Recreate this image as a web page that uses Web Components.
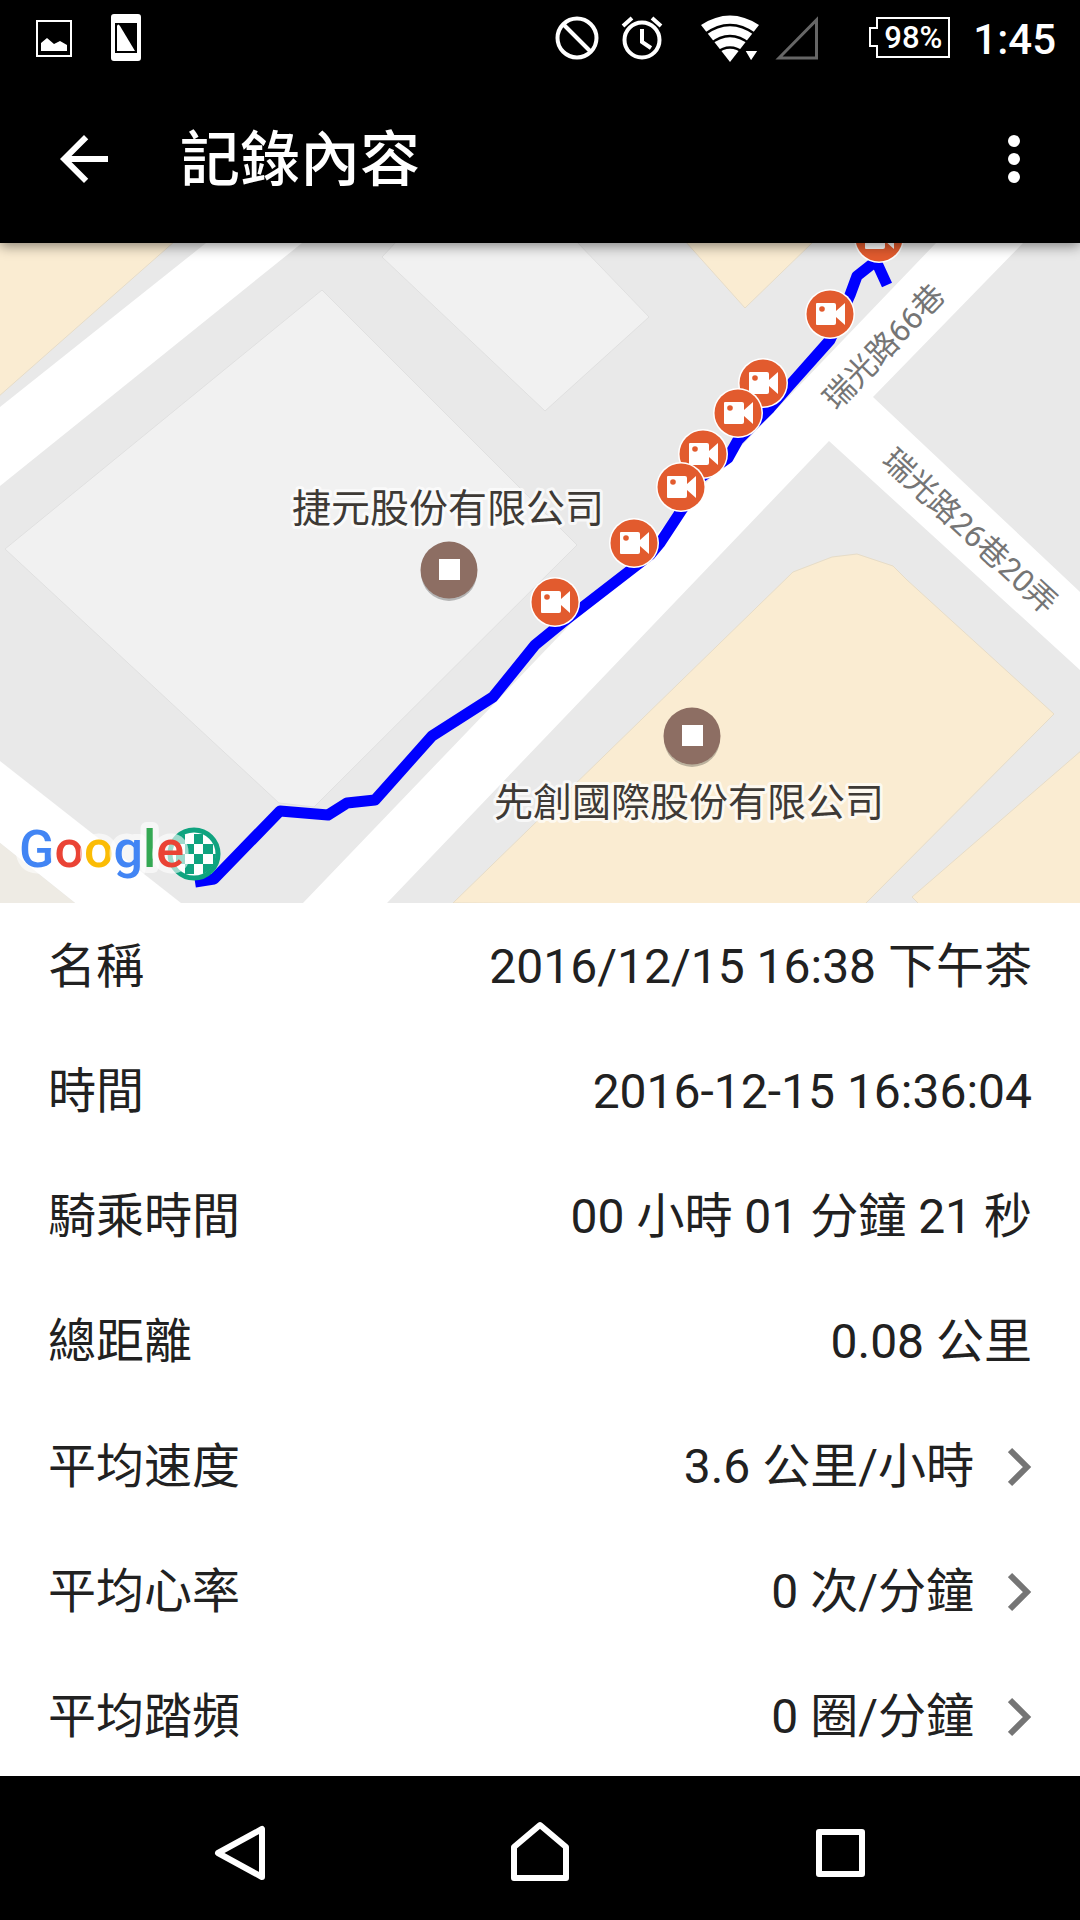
<!DOCTYPE html>
<html lang="zh-Hans">
<head>
<meta charset="utf-8">
<meta name="viewport" content="width=device-width, initial-scale=1">
<title>記錄內容</title>
<style>
  body {
    margin: 0;
    background: #fff;
    color: #212121;
    font-family: Roboto, "Noto Sans CJK SC", sans-serif;
  }
</style>
</head>
<body>
<ride-screen>
  <status-bar slot="status" battery="98%" time="1:45"></status-bar>
  <app-bar slot="bar">記錄內容</app-bar>
  <route-map slot="map"></route-map>
  <record-row label="名稱">2016/12/15 16:38 下午茶</record-row>
  <record-row label="時間">2016-12-15 16:36:04</record-row>
  <record-row label="騎乘時間">00 小時 01 分鐘 21 秒</record-row>
  <record-row label="總距離">0.08 公里</record-row>
  <record-row label="平均速度" more>3.6 公里/小時</record-row>
  <record-row label="平均心率" more>0 次/分鐘</record-row>
  <record-row label="平均踏頻" more>0 圈/分鐘</record-row>
  <nav-bar slot="nav"></nav-bar>
</ride-screen>

<script>
// Page frame: fixed bars, map, scrolling list
class RideScreen extends HTMLElement {
  constructor() {
    super();
    this.attachShadow({ mode: 'open' }).innerHTML = `
      <style>
        :host {
          display: flex;
          flex-direction: column;
          height: 100vh;
        }
        main {
          flex: 1;
          min-height: 0;
          overflow-y: auto;
          scrollbar-width: none;
        }
      </style>
      <slot name="status"></slot>
      <slot name="bar"></slot>
      <slot name="map"></slot>
      <main><slot></slot></main>
      <slot name="nav"></slot>
    `;
  }
}

// System status bar
class StatusBar extends HTMLElement {
  constructor() {
    super();
    this.attachShadow({ mode: 'open' });
  }

  connectedCallback() {
    this.shadowRoot.innerHTML = `
      <style>
        :host {
          display: flex;
          justify-content: space-between;
          height: 75px;
          padding: 0 24px 0 36px;
          background: #000;
          color: #fff;
          font-weight: 500;
        }
        .group { display: flex; align-items: center; }
        .left { gap: 39px; }
        .alerts { display: flex; gap: 22px; margin-right: 38px; }
        .radio { display: flex; gap: 14px; margin-right: 50px; }
        svg { display: block; }
        .battery {
          display: grid;
          place-items: center;
          margin-right: 22px;
        }
        .battery > * { grid-area: 1 / 1; }
        .battery span { font-size: 31px; line-height: 42px; padding-left: 6px; }
        time { font-size: 42px; line-height: 75px; padding-top: 3px; }
      </style>
      <div class="group left">
        <svg width="36" height="48" viewBox="0 0 36 48" fill="#fff">
          <path d="M1 7h34v35H1z" fill="none" stroke="#fff" stroke-width="2"/>
          <path d="M5 29l6-5 7 6 6-3 7 4v6H5z"/>
        </svg>
        <svg width="30" height="48" viewBox="0 0 30 48" fill="#fff">
          <path fill-rule="evenodd" d="M3 0h24q3 0 3 3v41q0 3-3 3H3q-3 0-3-3V3q0-3 3-3zM4 9v30h22V9z"/>
          <path d="M6 12q1-3 3 0l15 25H6z"/>
        </svg>
      </div>
      <div class="group">
        <div class="alerts">
          <svg width="44" height="48" viewBox="0 0 44 48" fill="none" stroke="#fff" stroke-width="4">
            <circle cx="22" cy="24" r="19.500"/>
            <path d="M8 10l28 28"/>
          </svg>
          <svg width="42" height="48" viewBox="0 0 42 48" fill="none" stroke="#fff" stroke-width="4">
            <circle cx="21" cy="26" r="17.500"/>
            <path d="M21 15v13l9 6M2 12l9-8M31 4l9 8"/>
          </svg>
        </div>
        <div class="radio">
          <svg width="59" height="48" viewBox="0 0 59 48">
            <path d="M0 11Q29-8 58 11L29 48z" fill="#fff"/>
            <path d="M4 20Q29 2 54 20M9 30Q29 14 49 30M15 39Q29 28 43 39" fill="none" stroke="#000" stroke-width="2.500"/>
            <path d="M43 36h15l-8 12z" fill="#fff" stroke="#000" stroke-width="2"/>
          </svg>
          <svg width="45" height="48" viewBox="0 0 45 48">
            <path d="M5 44L42.500 6v38z" fill="none" stroke="#666" stroke-width="3"/>
          </svg>
        </div>
        <div class="battery">
          <svg width="82" height="42" viewBox="0 0 82 42" fill="none" stroke="#fff" stroke-width="2">
            <path d="M8 1h72v39H8V29H1V11h7z"/>
          </svg>
          <span>${this.getAttribute('battery')}</span>
        </div>
        <time>${this.getAttribute('time')}</time>
      </div>
    `;
  }
}

// Title bar with back and overflow buttons
class AppBar extends HTMLElement {
  constructor() {
    super();
    this.attachShadow({ mode: 'open' }).innerHTML = `
      <style>
        :host {
          position: relative;
          z-index: 1;
          display: flex;
          align-items: center;
          height: 168px;
          padding: 0 30px 0 48px;
          background: #000;
          color: #fff;
          box-shadow: 0 3px 12px rgba(0, 0, 0, .45);
        }
        button {
          padding: 0;
          border: 0;
          background: none;
          color: inherit;
        }
        svg { display: block; }
        h1 {
          flex: 1;
          margin: 0;
          padding: 4px 0 0 60px;
          font-size: 60px;
          line-height: 72px;
          font-weight: 500;
        }
      </style>
      <button aria-label="返回">
        <svg width="72" height="72" viewBox="0 0 24 24" fill="currentColor">
          <path d="M20 11H7.830l5.590-5.590L12 4l-8 8 8 8 1.410-1.410L7.830 13H20z"/>
        </svg>
      </button>
      <h1><slot></slot></h1>
      <button aria-label="更多">
        <svg width="72" height="72" viewBox="0 0 24 24" fill="currentColor">
          <circle cx="12" cy="6" r="2"/><circle cx="12" cy="12" r="2"/><circle cx="12" cy="18" r="2"/>
        </svg>
      </button>
    `;
  }
}

// Recorded route drawn over the street map
class RouteMap extends HTMLElement {
  constructor() {
    super();
    this.attachShadow({ mode: 'open' });
    this.videos = [
      [879, 238], [830, 314], [763, 383], [738, 413],
      [703, 454], [681, 487], [634, 543], [555, 602]
    ];
    this.places = [[449, 570], [692, 736]];
  }

  connectedCallback() {
    const use = (id, list) => list.map(([x, y]) => `<use href="#${id}" x="${x}" y="${y}"/>`).join('');

    this.shadowRoot.innerHTML = `
      <style>
        :host {
          display: block;
          flex: none;
          aspect-ratio: 18 / 11;
          overflow: hidden;
        }
        svg { display: block; width: 100%; height: 100%; }
        .building { fill: #f1f1f1; stroke: #e0e0e0; }
        .shop { fill: #faecd2; stroke: #e6dcc8; }
        .road { fill: #fff; }
        .route { fill: none; stroke: #00f; stroke-width: 11; stroke-linejoin: round; }
        text { font-family: Roboto, "Noto Sans CJK SC", sans-serif; text-anchor: middle; }
        .place {
          font-size: 39px;
          fill: #3e3a36;
          stroke: #fff;
          stroke-opacity: .7;
          stroke-width: 6;
          stroke-linejoin: round;
          paint-order: stroke;
        }
        .street { font-size: 31px; fill: #757575; }
        .brand {
          font-size: 52px;
          font-weight: 500;
          text-anchor: start;
          stroke: #fff;
          stroke-opacity: .6;
          stroke-width: 12;
          stroke-linejoin: round;
          paint-order: stroke;
        }
      </style>
      <svg viewBox="0 243 1080 660" preserveAspectRatio="xMidYMid slice">
        <defs>
          <g id="video">
            <circle r="25" fill="#fff"/>
            <circle r="23.500" fill="#e25b2e"/>
            <path d="M-14-10q0-1 1-1H4q2 0 2 2v6l9-8v22L6 3v6q0 2-2 2h-17q-1 0-1-1z" fill="#fff"/>
            <circle cx="-8" cy="-5" r="2.800" fill="#e25b2e"/>
          </g>
          <g id="place">
            <circle cy="3" r="28" fill="#000" opacity=".25"/>
            <circle r="28.500" fill="#8d6e63"/>
            <path d="M-10-11h21v21h-21z" fill="#fff"/>
          </g>
          <clipPath id="disc"><circle cx="194" cy="854" r="22"/></clipPath>
        </defs>
        <path d="M0 243h1080v660H0z" fill="#e9e9e9"/>
        <path class="shop" d="M-2 241h177L-2 397zM685 241l60 67 69-67z"/>
        <path class="shop" d="M453 903L793 572l39-15 25-3 36 12 14 14 147 134-190 191zM1082 750L912 897l8 8h162z"/>
        <path class="building" d="M322 290L5 549l274 254 35 4 263-262-59-59z"/>
        <path class="building" d="M397 241l-15 16 163 154 104-94-73-76z"/>
        <path class="road" d="M206 243h96L0 486v-79z"/>
        <path class="road" d="M936 243h87L873 397l207 195v78L829 441 387 903h-84z"/>
        <path class="road" d="M0 761l181 142H75L0 843z"/>
        <path d="M0 843l75 60H0z" fill="#eeebe4"/>
        <text class="street" transform="translate(883 346) rotate(-46)" y="12">瑞光路66巷</text>
        <text class="street" transform="translate(970 531) rotate(43)" y="11">瑞光路26巷20弄</text>
        ${use('place', this.places)}
        <text class="place" x="448" y="522">捷元股份有限公司</text>
        <text class="place" x="689" y="816">先創國際股份有限公司</text>
        <path class="route" d="M195 882l19-3 66-68 48 4 19-12 28-3 57-64 61-39 42-52 27-22 88-68 10-12 23-35 17-30 28-20 10-18 32-32 20-23 40-45 20-45 7-19 19-15 11 24"/>
        ${use('video', this.videos)}
        <circle cx="194" cy="854" r="24" fill="#fff" stroke="#0fa37f" stroke-width="5"/>
        <path clip-path="url(#disc)" fill="#0fa37f" d="M194 834h9v10h-9zM176 834h9v10h-9zM185 844h9v10h-9zM203 844h10v10h-10zM176 854h9v10h-9zM194 854h9v10h-9zM213 854h9v10h-9zM185 864h9v10h-9zM203 864h10v10h-10zM213 834h9v10h-9z"/>
        <text class="brand" x="19" y="867"><tspan fill="#4285f4">G</tspan><tspan fill="#ea4335">o</tspan><tspan fill="#fbbc05">o</tspan><tspan fill="#4285f4">g</tspan><tspan fill="#34a853">l</tspan><tspan fill="#ea4335">e</tspan></text>
      </svg>
    `;
  }
}

// One line of the record; "more" turns it into a button with a chevron
class RecordRow extends HTMLElement {
  constructor() {
    super();
    this.attachShadow({ mode: 'open' });
  }

  connectedCallback() {
    const more = this.hasAttribute('more');
    const tag = more ? 'button' : 'div';

    this.shadowRoot.innerHTML = `
      <style>
        :host { display: block; }
        .row {
          display: flex;
          align-items: center;
          box-sizing: border-box;
          width: 100%;
          height: 125px;
          padding: 3px 48px 0;
          border: 0;
          background: #fff;
          color: inherit;
          font: inherit;
          font-size: 48px;
          line-height: 72px;
          text-align: left;
        }
        .value { flex: 1; text-align: right; }
        svg { display: block; margin-left: 34px; }
      </style>
      <${tag} class="row">
        <span>${this.getAttribute('label')}</span>
        <span class="value"><slot></slot></span>
        ${more ? `<svg width="24" height="40" viewBox="0 0 24 40" fill="none" stroke="#757575" stroke-width="6">
          <path d="M2 3l17 17L2 37"/>
        </svg>` : ''}
      </${tag}>
    `;
  }
}

// System navigation buttons
class NavBar extends HTMLElement {
  constructor() {
    super();
    this.attachShadow({ mode: 'open' }).innerHTML = `
      <style>
        :host { display: block; background: #000; }
        nav {
          display: flex;
          height: 144px;
          padding: 0 90px;
        }
        button {
          flex: 1;
          display: grid;
          place-items: center;
          padding: 0;
          border: 0;
          background: none;
        }
        svg {
          fill: none;
          stroke: #fff;
          stroke-width: 6;
          stroke-linejoin: round;
        }
      </style>
      <nav>
        <button aria-label="返回"><svg width="72" height="72" viewBox="0 0 72 72"><path d="M58 17v48L14 41z"/></svg></button>
        <button aria-label="首頁"><svg width="72" height="72" viewBox="0 0 72 72"><path d="M10 35l26-22 26 22v31H10z"/></svg></button>
        <button aria-label="最近"><svg width="72" height="72" viewBox="0 0 72 72"><path d="M15 20h43v42H15z"/></svg></button>
      </nav>
    `;
  }
}

customElements.define('ride-screen', RideScreen);
customElements.define('status-bar', StatusBar);
customElements.define('app-bar', AppBar);
customElements.define('route-map', RouteMap);
customElements.define('record-row', RecordRow);
customElements.define('nav-bar', NavBar);
</script>
</body>
</html>
